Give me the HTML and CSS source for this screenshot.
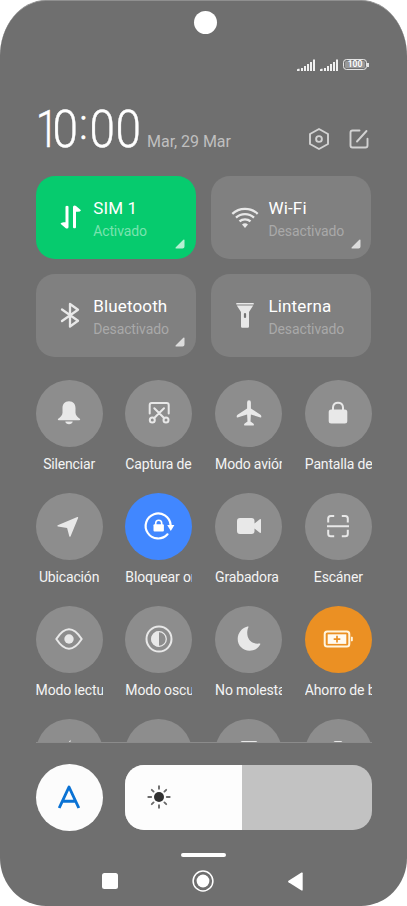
FILE: index.html
```html
<!DOCTYPE html>
<html lang="es">
<head>
<meta charset="utf-8">
<title>Centro de control</title>
<link rel="stylesheet" href="styles.css">
</head>
<body>
<main class="phone">
  <div class="camera"></div>
  <div class="status">
    <svg width="18" height="13" viewBox="0 0 18 13" fill="#f0f0f0"><path d="M0 12v-1.300q0-.9 1.600-.9h1V12zM4 9h2v3H4zM7 7h2v5H7zM10 5h2v7h-2zM13 3h2v9h-2zM16 .5h2V12h-2z"/></svg>
    <svg width="18" height="13" viewBox="0 0 18 13" fill="#f0f0f0"><path d="M0 12v-1.300q0-.9 1.600-.9h1V12zM4 9h2v3H4zM7 7h2v5H7zM10 5h2v7h-2zM13 3h2v9h-2zM16 .5h2V12h-2z"/></svg>
    <div class="battery"><span>100</span></div>
  </div>
  <header class="head">
    <div class="time"><span class="one">1</span><span class="zero">0</span><span class="colon">:</span><span class="zero">0</span><span class="zero">0</span></div>
    <div class="date">Mar, 29 Mar</div>
    <svg class="gear" width="22" height="24" viewBox="0 0 22 24" fill="none" stroke="#d2d2d2" stroke-width="1.900" stroke-linejoin="round"><path d="M11 2l9 5v10l-9 5-9-5V7z"/><circle cx="11" cy="12" r="2.900"/></svg>
    <svg class="edit" width="20" height="20" viewBox="0 0 20 20" fill="none" stroke="#d2d2d2" stroke-width="1.900" stroke-linecap="round" stroke-linejoin="round"><path d="M10.500 1.500h-7q-2 0-2 2v13q0 2 2 2h13q2 0 2-2v-6.700M8 12.500L17.500 2"/></svg>
  </header>

  <section class="cards">
    <article class="card on">
      <svg class="cardicon" width="28" height="28" viewBox="0 0 28 28" fill="#fff"><path d="M9.500 3.500q1.500-1.700 3 0v20.500q0 1.500-1.500 1.500-1 0-1.500-.5l-5-4.300q.8-2 5-1.400zM20 24.500q-1.500 1.700-3 0V4q0-1.500 1.500-1.500 1 0 1.500.5l5 4.300q-.8 2-5 1.400z"/></svg>
      <div class="copy"><h2>SIM 1</h2><p>Activado</p></div>
      <svg class="corner" width="10" height="10" viewBox="0 0 10 10"><path d="M9.500 1v6.500q0 2-2 2H.8q-.8-.3-.2-1L8.300.8q1-.7 1.200.2z"/></svg>
    </article>
    <article class="card">
      <svg class="cardicon" width="28" height="28" viewBox="0 0 28 28" fill="none" stroke="#e8e8e8" stroke-width="2.300"><path d="M1.300 10.800c7-6.700 18.400-6.700 25.400 0M5 14.600c5-4.700 13-4.700 18 0M8.500 18.400c3-2.800 8-2.800 11 0"/><path d="M14 25l-3-3.600q3-2.200 6 0z" fill="#e8e8e8" stroke="none"/></svg>
      <div class="copy"><h2>Wi-Fi</h2><p>Desactivado</p></div>
      <svg class="corner" width="10" height="10" viewBox="0 0 10 10"><path d="M9.500 1v6.500q0 2-2 2H.8q-.8-.3-.2-1L8.300.8q1-.7 1.200.2z"/></svg>
    </article>
    <article class="card">
      <svg class="cardicon" width="28" height="28" viewBox="0 0 28 28" fill="none" stroke="#e8e8e8" stroke-width="2.300" stroke-linecap="round" stroke-linejoin="round"><path d="M6 8.500l16 11.300L14 25.500V3l8 5.700L6 20"/></svg>
      <div class="copy"><h2>Bluetooth</h2><p>Desactivado</p></div>
      <svg class="corner" width="10" height="10" viewBox="0 0 10 10"><path d="M9.500 1v6.500q0 2-2 2H.8q-.8-.3-.2-1L8.300.8q1-.7 1.200.2z"/></svg>
    </article>
    <article class="card">
      <svg class="cardicon" width="28" height="28" viewBox="0 0 28 28" fill="#e8e8e8"><path d="M5.300 2h17.400v1.500H5.300zM5.800 4.600h16.400L18 11v14.500q0 1.200-1.200 1.200h-5.600q-1.200 0-1.200-1.200V11z"/><rect x="12.900" y="12" width="2.200" height="5" rx="1.100" fill="#747474"/></svg>
      <div class="copy"><h2>Linterna</h2><p>Desactivado</p></div>
    </article>
  </section>

  <section class="toggles">
    <div class="toggle"><div class="disc"><svg width="28" height="28" viewBox="0 0 28 28" fill="#e8e8e8"><path d="M14 2.200c4.400 0 6.500 3 6.500 7v4.500c0 2.500 2 4.300 4.300 6 .7.600.3 1.500-.5 1.500H3.700c-.8 0-1.200-.9-.5-1.500 2.300-1.700 4.300-3.500 4.300-6V9.200c0-4 2.100-7 6.500-7zM10.300 22.500h7.400c-.4 3.700-7 3.700-7.400 0z"/></svg></div><div class="label"><span>Silenciar</span></div></div>
    <div class="toggle"><div class="disc"><svg width="28" height="28" viewBox="0 0 28 28" fill="none" stroke="#e8e8e8" stroke-width="2" stroke-linecap="round"><path d="M4.700 14.500V6q0-2 2-2h15q2 0 2 2v8.500M9.300 9.200l10 10M19 9.200l-10 10"/><circle cx="7.300" cy="21" r="2.500"/><circle cx="21" cy="21" r="2.500"/></svg></div><div class="label"><span>Captura de pantalla</span></div></div>
    <div class="toggle"><div class="disc"><svg width="28" height="28" viewBox="0 0 28 28" fill="#e8e8e8"><path d="M14 1.300q1.900 0 1.900 2.200v6l9.200 6q1.200.8 1.200 1.700v.8q0 .6-.8.400l-9.600-2.900-.4 7 2.800 2q.6.500.6 1v.6q0 .5-.6.400H9.700q-.6.100-.6-.4v-.6q0-.5.600-1l2.800-2-.4-7-9.600 2.900q-.8.200-.8-.4v-.8q0-.9 1.200-1.700l9.200-6v-6q0-2.200 1.900-2.200z"/></svg></div><div class="label"><span>Modo avión</span></div></div>
    <div class="toggle"><div class="disc"><svg width="28" height="28" viewBox="0 0 28 28"><rect x="4.700" y="10.500" width="18.600" height="14" rx="2.500" fill="#e8e8e8"/><path d="M9 12V8.500c0-6.500 10-6.500 10 0V12" fill="none" stroke="#e8e8e8" stroke-width="2"/></svg></div><div class="label"><span>Pantalla de bloqueo</span></div></div>

    <div class="toggle"><div class="disc"><svg width="28" height="28" viewBox="0 0 28 28" fill="#e8e8e8"><path d="M2.700 13.300L22.300 5q1.200-.2.800 1l-7.600 18.400q-.7 1-1.200-.2l-2.200-8.300-9.200-1.400q-1.200-.5-.2-1.200z"/></svg></div><div class="label"><span>Ubicación</span></div></div>
    <div class="toggle"><div class="disc blue"><svg width="34" height="34" viewBox="0 0 34 34" fill="none" stroke="#fff" stroke-width="2.200"><path d="M25.500 25.300A12.500 12.500 0 1 1 28.600 15.800" stroke-linecap="round"/><path d="M25.200 16h7.200l-3.600 6z" fill="#fff" stroke="none"/><rect x="11.500" y="15.300" width="10.400" height="7.300" rx="1" fill="#fff" stroke="none"/><path d="M13.700 16v-1.700c0-4 6-4 6 0V16" stroke-width="1.600"/></svg></div><div class="label"><span>Bloquear orientación</span></div></div>
    <div class="toggle"><div class="disc"><svg width="28" height="28" viewBox="0 0 28 28" fill="#e8e8e8"><path d="M5 6h11.500q3 0 3 3v2.500l5.300-4.300q1.200-.7 1.200.7v12.200q0 1.400-1.200.7l-5.300-4.300V19q0 3-3 3H5q-3 0-3-3V9q0-3 3-3z"/></svg></div><div class="label start"><span>Grabadora</span></div></div>
    <div class="toggle"><div class="disc"><svg width="28" height="28" viewBox="0 0 28 28" fill="none" stroke="#e8e8e8" stroke-width="2"><path d="M4.200 10.500V6.500q0-2.500 2.500-2.500h3.500M17.800 4h3.500q2.500 0 2.500 2.500v4M4.200 17.800v4q0 2.500 2.500 2.500h3.500M17.800 24.300h3.500q2.500 0 2.500-2.500v-4M3 14.200h22"/></svg></div><div class="label"><span>Escáner</span></div></div>

    <div class="toggle"><div class="disc"><svg width="28" height="28" viewBox="0 0 28 28" fill="none" stroke="#e8e8e8" stroke-width="2"><path d="M1.300 14q12.700-19.500 25.400 0q-12.700 19.500-25.400 0z" stroke-linejoin="round"/><circle cx="14" cy="14" r="4.700" fill="#e8e8e8" stroke="none"/></svg></div><div class="label"><span>Modo lectura</span></div></div>
    <div class="toggle"><div class="disc"><svg width="28" height="28" viewBox="0 0 28 28" fill="none" stroke="#e8e8e8" stroke-width="2"><circle cx="14" cy="14" r="12.500"/><circle cx="14" cy="14" r="7.300" stroke-width="1.300"/><path d="M14 6.200a7.800 7.800 0 0 0 0 15.600z" fill="#e8e8e8" stroke="none"/></svg></div><div class="label"><span>Modo oscuro</span></div></div>
    <div class="toggle"><div class="disc"><svg width="28" height="28" viewBox="0 0 28 28" fill="#e8e8e8"><path d="M13.400 2.200C10.500 8.500 12.500 20 24.500 18.500q1.200-.2.700.9C22.500 24 19 25.700 14.500 25.700c-6.500 0-11.800-5-11.800-11.700C2.700 8 6.500 3 12.600 1.400q1.200-.2.800.8z"/></svg></div><div class="label"><span>No molestar</span></div></div>
    <div class="toggle"><div class="disc orange"><svg width="30" height="20" viewBox="0 0 30 20"><rect x="1.700" y="2.500" width="24.600" height="15" rx="2.500" fill="none" stroke="#fff5df" stroke-width="2"/><rect x="4.700" y="5.300" width="18.600" height="9.600" fill="#fffaf0"/><path d="M14 6.800v6.600M10.700 10.100h6.600" stroke="#eb9023" stroke-width="1.700"/><path d="M28 7.800h1.200q.6 0 .6.600v3.200q0 .6-.6.600H28z" fill="#fff5df"/></svg></div><div class="label"><span>Ahorro de batería</span></div></div>

    <div class="toggle"><div class="disc"><svg width="28" height="28" viewBox="0 0 28 28" fill="#e8e8e8"><path d="M15.500 1.700v12h6L12 26V15H6z"/></svg></div></div>
    <div class="toggle"><div class="disc"></div></div>
    <div class="toggle"><div class="disc"><svg width="28" height="28" viewBox="0 0 28 28" fill="none" stroke="#e8e8e8" stroke-width="2"><rect x="6.500" y="4" width="15" height="20" rx="1"/></svg></div></div>
    <div class="toggle"><div class="disc"><svg width="28" height="28" viewBox="0 0 28 28" fill="none" stroke="#e8e8e8" stroke-width="2"><rect x="10.500" y="4" width="7" height="20" rx="1"/></svg></div></div>
  </section>

  <section class="brightness">
    <div class="auto"><svg width="24" height="26" viewBox="0 0 24 26" fill="none" stroke="#0a72d4" stroke-width="2.900" stroke-linejoin="round"><path d="M2.200 24L12 3l9.800 21M5.700 17.300h12.600"/></svg></div>
    <div class="slider"><div class="level">
      <svg width="24" height="24" viewBox="0 0 24 24"><circle cx="12" cy="12" r="5" fill="#303030"/><path d="M12 1.300v2.400M12 20.300v2.400M1.300 12h2.900M19.800 12h2.900M4.800 4.800l1.800 1.800M17.400 17.400l1.800 1.800M19.200 4.800l-1.800 1.800M6.600 17.400l-1.800 1.800" stroke="#6b6b6b" stroke-width="1.900" stroke-linecap="round"/></svg>
    </div></div>
  </section>
  <div class="handle"></div>
  <nav class="nav">
    <svg width="16" height="16" viewBox="0 0 16 16"><rect width="16" height="16" rx="2.500" fill="#fff"/></svg>
    <svg width="22" height="22" viewBox="0 0 22 22"><circle cx="11" cy="11" r="9.900" fill="none" stroke="#fff" stroke-width="1.500"/><circle cx="11" cy="11" r="6.400" fill="#fff"/></svg>
    <svg width="15" height="19" viewBox="0 0 15 19" fill="#fff"><path d="M.5 8.800L13.500.6q1.200-.5 1.200.7v16.400q0 1.200-1.200.7L.5 10.200q-.8-.7 0-1.400z"/></svg>
  </nav>
</main>
</body>
</html>
```

FILE: styles.css
```css
* { box-sizing: border-box; }
body {
  margin: 0;
  background: #fff;
  font-family: Roboto, "Liberation Sans", sans-serif;
  color: #fff;
}
svg { display: block; flex: none; }
.phone {
  width: 407px;
  height: 906px;
  overflow: hidden;
  display: flex;
  flex-direction: column;
  padding: 9.500px 35.200px 0 35.600px;
  background: #6f6f6f;
  border-top: 1px solid #8f8f8f;
  border-radius: 46px 46px 46px 46px / 56px 56px 48px 48px;
}
.camera {
  width: 23.500px;
  height: 23.500px;
  margin-left: 158px;
  border-radius: 50%;
  background: #fff;
  flex: none;
}
.status {
  display: flex;
  justify-content: flex-end;
  gap: 5px;
  height: 13px;
  margin-top: 24.500px;
  padding-right: 3.300px;
  flex: none;
}
.battery {
  width: 24px;
  height: 11.500px;
  margin-right: 1.500px;
  border: 1.300px solid #e4e4e4;
  border-radius: 3.500px;
  box-shadow: inset 0 0 0 1px #707070;
  background: #989898;
  display: flex;
  align-items: center;
  justify-content: center;
  position: relative;
  font-size: 8.500px;
  line-height: 9px;
  font-weight: 600;
}
.battery::after {
  content: "";
  position: absolute;
  left: 23px;
  top: 3px;
  width: 2px;
  height: 4px;
  background: #e4e4e4;
}
.head {
  display: flex;
  height: 104.500px;
  padding: 28px 3.200px 0 0;
  flex: none;
}
.time {
  display: flex;
  width: 111.500px;
  font-size: 51px;
  line-height: 60px;
  font-weight: 300;
  -webkit-text-stroke: .4px #fff;
}
.time span {
  display: flex;
  justify-content: center;
  flex: none;
}
.one {
  width: 16px;
  transform: translateX(3px) scaleX(.8);
}
.zero { width: 26.600px; transform: scaleX(.9); }
.colon {
  width: 10.500px;
  font-size: 42px;
  line-height: 50px;
}
.date {
  margin-top: 32px;
  font-size: 16px;
  line-height: 20px;
  color: #bfbfbf;
  letter-spacing: -.05px;
  flex: 1;
  white-space: nowrap;
}
.gear { margin-top: 27px; }
.edit { margin: 29px 0 0 18.500px; }
.cards {
  display: grid;
  grid-template-columns: 160.300px 160.300px;
  grid-auto-rows: 83px;
  gap: 15.300px 15px;
  flex: none;
}
.card {
  position: relative;
  display: flex;
  padding: 22px 0 0 20.300px;
  border-radius: 19px;
  background: #808080;
}
.card.on { background: #06cb6e; }
.cardicon { margin-top: 5px; }
.copy { margin-left: 9.300px; }
.copy h2 {
  margin: 0;
  font-size: 17px;
  line-height: 20px;
  font-weight: 400;
  letter-spacing: .15px;
}
.copy p {
  margin: 4px 0 0;
  font-size: 14px;
  line-height: 18px;
  letter-spacing: -.12px;
  color: #a9a9a9;
}
.on p { color: #79e3ae; }
.corner {
  position: absolute;
  right: 10.700px;
  bottom: 10px;
  fill: #dcdcdc;
}
.on .corner { fill: #b7f0d3; }
.toggles {
  display: grid;
  grid-template-columns: repeat(4, 67px);
  grid-auto-rows: 113px;
  justify-content: space-between;
  height: 385.700px;
  padding-top: 22.700px;
  overflow: hidden;
  border-bottom: 1px solid #8b8b8b;
  flex: none;
}
.disc {
  width: 67px;
  height: 67px;
  border-radius: 50%;
  background: #8d8d8d;
  display: flex;
  align-items: center;
  justify-content: center;
}
.blue { background: #4187ff; }
.orange { background: #eb9023; }
.label {
  display: flex;
  height: 22px;
  margin-top: 8px;
  overflow: hidden;
  font-size: 14px;
  line-height: 18px;
  letter-spacing: -.16px;
  white-space: nowrap;
  color: #f4f4f4;
}
.label span { margin: 0 auto; }
.label.start span { margin: 0; }
.brightness {
  display: flex;
  align-items: center;
  justify-content: space-between;
  margin-top: 20.800px;
  flex: none;
}
.auto {
  width: 67px;
  height: 67px;
  border-radius: 50%;
  background: #fcfcfc;
  display: flex;
  align-items: center;
  justify-content: center;
}
.slider {
  width: 247px;
  height: 64.500px;
  border-radius: 19px;
  overflow: hidden;
  background: #c2c2c2;
}
.level {
  width: 117.500px;
  height: 100%;
  padding-left: 22.500px;
  background: #fdfdfd;
  display: flex;
  align-items: center;
}
.handle {
  width: 45px;
  height: 4px;
  margin: 22px 0 0 145.500px;
  border-radius: 2px;
  background: #fff;
  flex: none;
}
.nav {
  display: flex;
  align-items: center;
  justify-content: space-between;
  height: 22px;
  margin: 13.300px 68.500px 0 66.800px;
  flex: none;
}
```
